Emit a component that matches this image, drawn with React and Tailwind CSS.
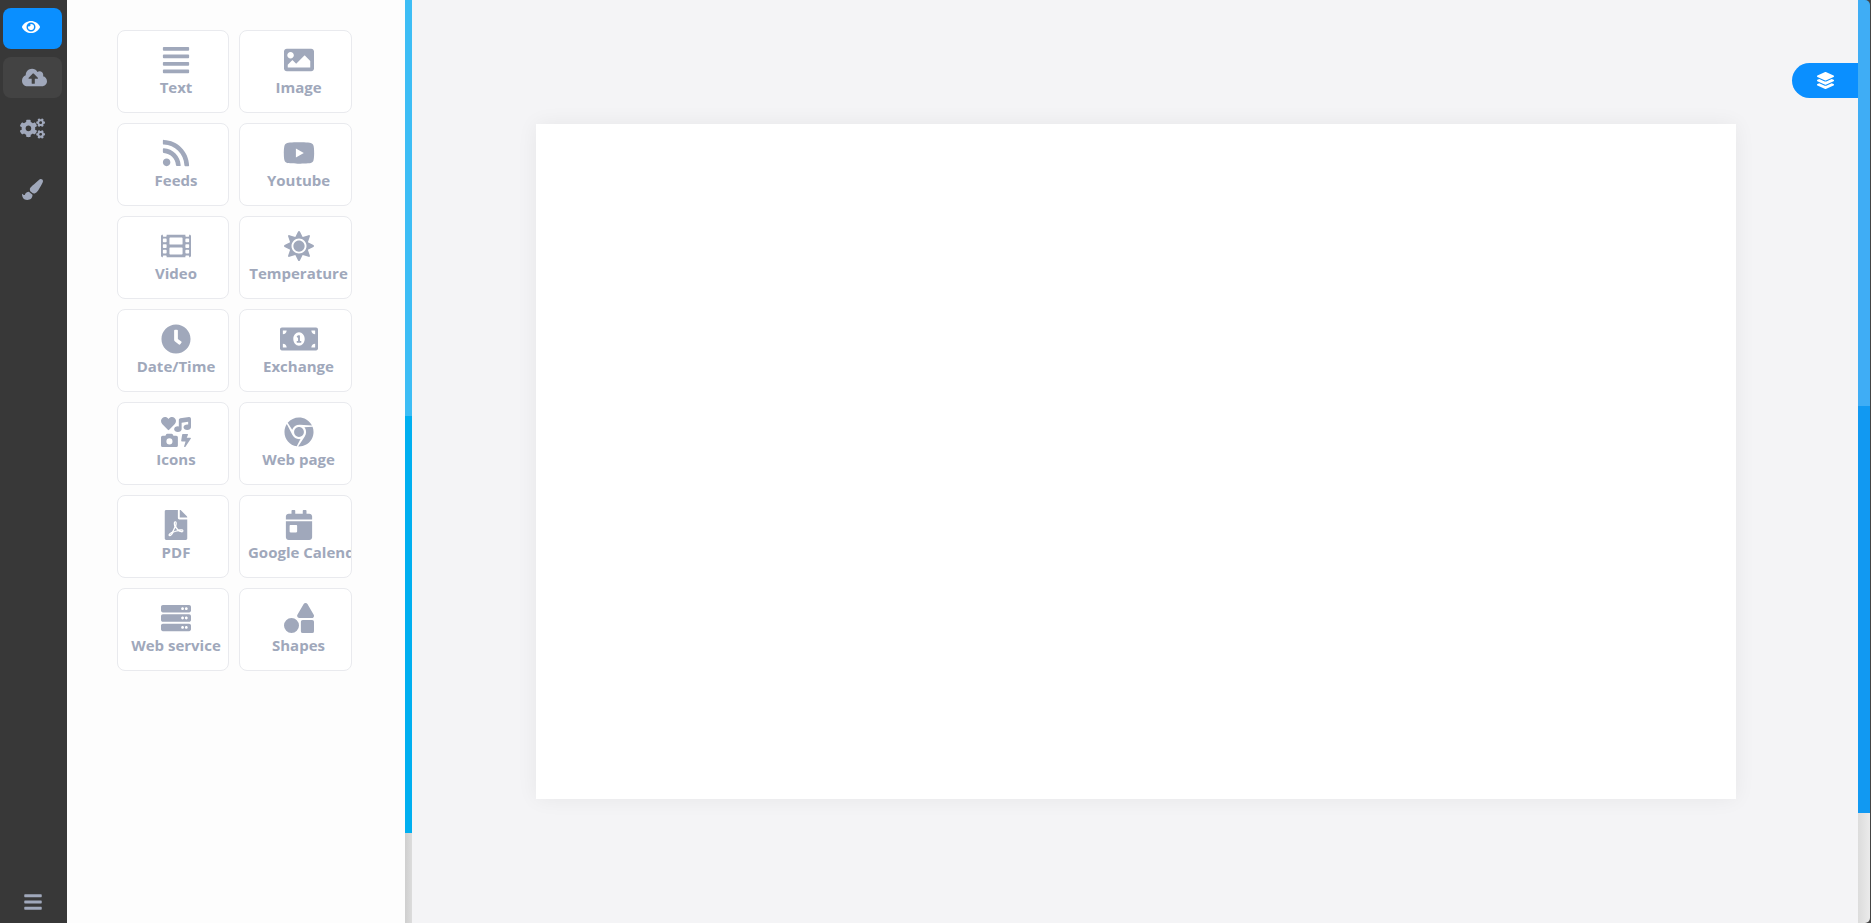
import {
  FaAlignJustify, FaBars, FaCalendarDay, FaChrome, FaClock, FaCloudUploadAlt, FaCogs, FaEye, FaFilePdf, FaFilm,
  FaIcons, FaImage, FaLayerGroup, FaMoneyBillAlt, FaPaintBrush, FaRss, FaServer, FaShapes, FaSun, FaYoutube,
} from "react-icons/fa";

const widgets = [
  { label: "Text", icon: FaAlignJustify, size: 30 },
  { label: "Image", icon: FaImage, size: 30 },
  { label: "Feeds", icon: FaRss, size: 30 },
  { label: "Youtube", icon: FaYoutube, size: 32 },
  { label: "Video", icon: FaFilm, size: 30 },
  { label: "Temperature", icon: FaSun, size: 30 },
  { label: "Date/Time", icon: FaClock, size: 30 },
  { label: "Exchange", icon: FaMoneyBillAlt, size: 38 },
  { label: "Icons", icon: FaIcons, size: 30 },
  { label: "Web page", icon: FaChrome, size: 30 },
  { label: "PDF", icon: FaFilePdf, size: 30 },
  { label: "Google Calendar", icon: FaCalendarDay, size: 30 },
  { label: "Web service", icon: FaServer, size: 30 },
  { label: "Shapes", icon: FaShapes, size: 30 },
];

const Sidebar = () => (
  <aside className="w-[67px] shrink-0 bg-[#383838] flex flex-col items-start pl-[3px] pt-2 pb-[11px] text-[#a0a8bb]">
    <button className="w-[59px] h-[41px] rounded-lg bg-[#0a8fff] text-white flex items-center justify-center pr-[3px] pb-[3px]">
      <FaEye size={18} />
    </button>
    <button className="w-[59px] h-[41px] mt-2 rounded-lg bg-[#434343] flex items-center justify-center pl-[3px]">
      <FaCloudUploadAlt size={25} />
    </button>
    <button className="w-[59px] h-[41px] mt-[10px] flex items-center justify-center">
      <FaCogs size={25} />
    </button>
    <button className="w-[59px] h-[41px] mt-5 flex items-center justify-center">
      <FaPaintBrush size={21} />
    </button>
    <button className="w-[59px] mt-auto flex justify-center">
      <FaBars size={20} />
    </button>
  </aside>
);

const WidgetCard = ({ label, icon: Icon, size }) => (
  <div className="h-[83px] rounded-lg border border-[#e9eaee] bg-white overflow-hidden pl-2 pr-[2px] pt-[14px] flex flex-col items-center text-[#a0a8bb]">
    <div className="h-[30px] flex items-center justify-center shrink-0">
      <Icon size={size} />
    </div>
    <span className="text-[15px] font-bold whitespace-nowrap leading-[19px] mt-[3px] w-full text-center">{label}</span>
  </div>
);

const App = () => {
  return (
    <div className="h-[923px] w-[1871px] flex overflow-hidden bg-[#444444] font-['Open_Sans',sans-serif]">
      <Sidebar />

      <section className="w-[338px] shrink-0 bg-[#fdfdfd] pl-[50px] pt-[30px]">
        <div className="grid grid-cols-[112px_113px] gap-x-[10px] gap-y-[10px]">
          {widgets.map((w) => (
            <WidgetCard key={w.label} label={w.label} icon={w.icon} size={w.size} />
          ))}
        </div>
      </section>

      <div className="w-[7px] shrink-0 flex flex-col">
        <div className="h-[416px] bg-[#3dbdf5]" />
        <div className="h-[417px] bg-[#00aff0]" />
        <div className="flex-1 bg-gradient-to-r from-[#cfcfcf] to-[#dcdcdc]" />
      </div>

      <main className="relative flex-1 bg-[#f4f4f6] pl-[124px] pt-[124px]">
        <div className="w-[1200px] h-[675px] bg-white shadow-[0_0_20px_rgba(0,0,0,0.06)]" />
        <button className="absolute right-0 top-[63px] w-[66px] h-[35px] rounded-l-full bg-[#0a8fff] text-white flex items-center justify-center">
          <FaLayerGroup size={17} />
        </button>
      </main>

      <div className="w-[12px] mr-[1px] shrink-0 flex flex-col rounded-r-[5px] overflow-hidden">
        <div className="h-[406px] bg-[#3fadf5]" />
        <div className="h-[407px] bg-[#1199f2]" />
        <div className="flex-1 bg-gradient-to-r from-[#dcdcdc] to-[#ebebeb]" />
      </div>
    </div>
  );
};

export default App;
